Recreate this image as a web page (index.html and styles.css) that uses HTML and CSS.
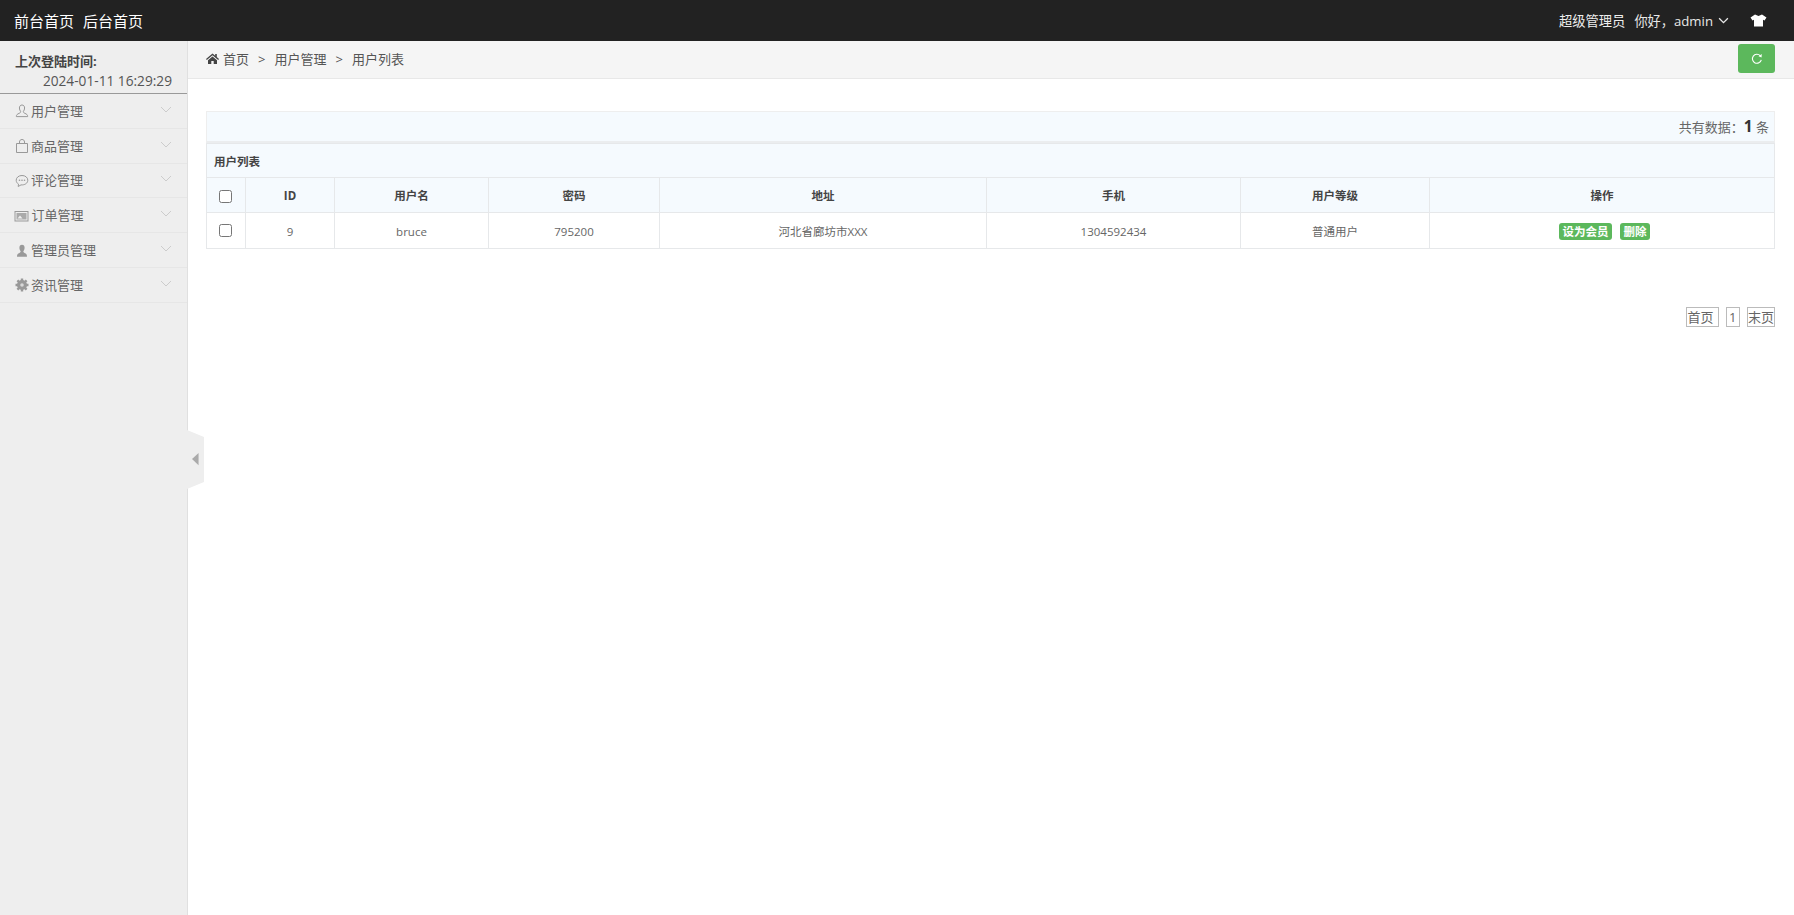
FILE: index.html
```html
<!DOCTYPE html>
<html lang="zh-CN">
<head>
<meta charset="utf-8">
<title>用户列表</title>
<link rel="stylesheet" href="styles.css">
</head>
<body>
<header class="topbar">
  <nav class="topnav"><a>前台首页</a><a>后台首页</a></nav>
  <div class="topuser">
    <span class="role">超级管理员</span>
    <span class="hello">你好，admin</span>
    <svg class="caret" width="11" height="7" viewBox="0 0 12 8"><path d="M1 1.500 6 6.500 11 1.500" fill="none" stroke="#e8e8e8" stroke-width="1.500"/></svg>
    <svg class="shirt" width="17" height="13" viewBox="0 0 17 13"><path d="M5 0.500 8.500 2 12 0.500 16.500 3.500 14.500 6.500 13 5.800V12.500H4V5.800L2.500 6.500 0.500 3.500Z" fill="#fff"/></svg>
  </div>
</header>
<div class="layout">
  <aside class="sidebar">
    <div class="lastlogin">
      <div class="ll-label">上次登陆时间:</div>
      <div class="ll-time">2024-01-11 16:29:29</div>
    </div>
    <ul class="menu">
      <li class="menu-item">
        <svg class="mi" width="14" height="14" viewBox="0 0 14 14"><path d="M7 1C5.300 1 4.400 2.300 4.400 4 4.400 5.600 5 6.600 5.600 7.400 5.800 8.200 5.400 8.800 4 9.400 2.600 10 1.300 10.600 1.300 12.600H12.700C12.700 10.600 11.400 10 10 9.400 8.600 8.800 8.200 8.200 8.400 7.400 9 6.600 9.600 5.600 9.600 4 9.600 2.300 8.700 1 7 1Z" fill="none" stroke="#999" stroke-width="1"/></svg>
        <span class="ml">用户管理</span>
        <svg class="chev" width="12" height="7" viewBox="0 0 12 7"><path d="M1 1 6 6 11 1" fill="none" stroke="#ccc" stroke-width="1"/></svg>
      </li>
      <li class="menu-item">
        <svg class="mi" width="14" height="14" viewBox="0 0 14 14"><path d="M1.500 4.500H12.500V13.500H1.500ZM4.500 4.500V3C4.500 1.400 5.500 .5 7 .5S9.500 1.400 9.500 3V4.500" fill="none" stroke="#999" stroke-width="1"/></svg>
        <span class="ml">商品管理</span>
        <svg class="chev" width="12" height="7" viewBox="0 0 12 7"><path d="M1 1 6 6 11 1" fill="none" stroke="#ccc" stroke-width="1"/></svg>
      </li>
      <li class="menu-item">
        <svg class="mi" width="14" height="14" viewBox="0 0 14 14"><path d="M7 1.500C3.700 1.500 1.200 3.500 1.200 6.200 1.200 8 2.200 9.300 3.500 10.100L3.200 12.500 6 10.900C9.800 11.200 12.800 9.200 12.800 6.200 12.800 3.500 10.300 1.500 7 1.500Z" fill="none" stroke="#999" stroke-width="1"/><circle cx="4.500" cy="6.300" r=".8" fill="#999"/><circle cx="7" cy="6.300" r=".8" fill="#999"/><circle cx="9.500" cy="6.300" r=".8" fill="#999"/></svg>
        <span class="ml">评论管理</span>
        <svg class="chev" width="12" height="7" viewBox="0 0 12 7"><path d="M1 1 6 6 11 1" fill="none" stroke="#ccc" stroke-width="1"/></svg>
      </li>
      <li class="menu-item mi-wide">
        <svg class="mi" width="15" height="12" viewBox="0 0 14 12"><rect x=".5" y="1.500" width="13" height="9.500" fill="none" stroke="#999"/><path d="M2 3H12V9.500H2Z" fill="#aaa"/><path d="M3 8.500 5.500 5.500 8 8.500Z" fill="#eee"/></svg>
        <span class="ml">订单管理</span>
        <svg class="chev" width="12" height="7" viewBox="0 0 12 7"><path d="M1 1 6 6 11 1" fill="none" stroke="#ccc" stroke-width="1"/></svg>
      </li>
      <li class="menu-item">
        <svg class="mi" width="14" height="14" viewBox="0 0 14 14"><path d="M7 .8C5.300 .8 4.400 2.100 4.400 3.800 4.400 5.400 5 6.400 5.600 7.200 5.800 8 5.400 8.600 4 9.200 3 9.600 2 10.100 2 12.800H12C12 10.100 11 9.600 10 9.200 8.600 8.600 8.200 8 8.400 7.200 9 6.400 9.600 5.400 9.600 3.800 9.600 2.100 8.700 .8 7 .8Z" fill="#999"/></svg>
        <span class="ml">管理员管理</span>
        <svg class="chev" width="12" height="7" viewBox="0 0 12 7"><path d="M1 1 6 6 11 1" fill="none" stroke="#ccc" stroke-width="1"/></svg>
      </li>
      <li class="menu-item">
        <svg class="mi" width="14" height="14" viewBox="0 0 14 14"><circle cx="7" cy="7" r="3.600" fill="none" stroke="#999" stroke-width="2.800"/><path d="M7 .5V13.500M.5 7H13.500M2.400 2.400 11.600 11.600M11.600 2.400 2.400 11.600" stroke="#999" stroke-width="2.400"/><circle cx="7" cy="7" r="1.800" fill="#d8d8d8"/></svg>
        <span class="ml">资讯管理</span>
        <svg class="chev" width="12" height="7" viewBox="0 0 12 7"><path d="M1 1 6 6 11 1" fill="none" stroke="#ccc" stroke-width="1"/></svg>
      </li>
    </ul>
    <div class="collapse"><svg width="7" height="14" viewBox="0 0 8 14"><path d="M7.500 0 0 7 7.500 14Z" fill="#aaa"/></svg></div>
  </aside>
  <main class="content">
    <div class="crumbs">
      <svg class="home" width="13" height="11" viewBox="0 0 13 11"><path d="M6.500 .5 0 6 .8 6.900 6.500 2.200 12.200 6.900 13 6 10.800 4.100V1H9.200V2.800ZM2 7.300V11H5.300V8H7.700V11H11V7.300L6.500 3.500Z" fill="#444"/></svg>
      <span>首页</span><span class="sep">&gt;</span><span>用户管理</span><span class="sep">&gt;</span><span>用户列表</span>
      <button class="refresh" type="button" aria-label="刷新"><svg width="12" height="12" viewBox="0 0 12 12"><path d="M10.300 6.900A4.500 4.500 0 1 1 9.200 2.700" fill="none" stroke="#fff" stroke-width="1.100"/><path d="M10.800 1 10.500 4.400 7.500 3.200Z" fill="#fff"/></svg></button>
    </div>
    <div class="panel">
      <div class="totals">共有数据：<strong>1</strong> 条</div>
      <table class="grid">
        <colgroup>
          <col class="c1"><col class="c2"><col class="c3"><col class="c4"><col class="c5"><col class="c6"><col class="c7"><col>
        </colgroup>
        <thead>
          <tr class="title-row"><th colspan="8">用户列表</th></tr>
          <tr class="head-row">
            <th><input type="checkbox"></th><th>ID</th><th>用户名</th><th>密码</th><th>地址</th><th>手机</th><th>用户等级</th><th>操作</th>
          </tr>
        </thead>
        <tbody>
          <tr>
            <td><input type="checkbox"></td><td>9</td><td>bruce</td><td>795200</td><td>河北省廊坊市XXX</td><td>1304592434</td><td>普通用户</td>
            <td class="actions"><a class="tag">设为会员</a><a class="tag">删除</a></td>
          </tr>
        </tbody>
      </table>
      <div class="pager"><a class="first">首页</a><a class="num">1</a><a class="last">末页</a></div>
    </div>
  </main>
</div>
</body>
</html>
```
FILE: styles.css
```css
* { box-sizing: border-box; }
html, body { margin: 0; height: 100%; }
body {
  font-family: "Open Sans", "Noto Sans CJK SC", sans-serif;
  font-size: 12px;
  color: #555;
  background: #fff;
  overflow: hidden;
}
.topbar {
  height: 41px;
  background: #222;
  display: flex;
  align-items: center;
  justify-content: space-between;
  padding: 0 27px 1px 14px;
}
.topnav { display: flex; gap: 9px; color: #fff; font-size: 15px; }
.topuser { display: flex; align-items: center; color: #e8e8e8; font-size: 13.200px; }
.role { color: #eee; font-size: 13.300px; margin-right: 9px; }
.caret { margin-left: 5px; }
.shirt { margin-left: 21px; }
.layout { display: flex; height: 874px; }
.sidebar {
  width: 188px;
  flex: none;
  background: #eee;
  border-right: 1px solid #e0e0e0;
  position: relative;
}
.lastlogin { height: 53px; border-bottom: 1px solid #999; padding: 10px 15px 0; color: #333; }
.ll-label { font-size: 13px; font-weight: 700; line-height: 20px; color: #444; }
.ll-time { font-size: 13.700px; line-height: 20px; text-align: right; color: #555; }
.menu { list-style: none; margin: 0; padding: 0; }
.menu-item {
  height: 34.800px;
  border-bottom: 1px solid #e6e6e6;
  display: flex;
  align-items: center;
  padding: 0 15px 1px 14.500px;
  font-size: 13px;
  color: #666;
  gap: 2.500px;
}
.mi { flex: none; margin-top: 2px; }
.mi-wide { padding-left: 14px; }
.ml { flex: 1; }
.chev { flex: none; margin: -2px 0 0; }
.collapse {
  position: absolute;
  left: 187px;
  top: 389px;
  width: 17px;
  height: 59px;
  background: #eee;
  clip-path: polygon(0 0, 100% 12%, 100% 88%, 0 100%);
  display: flex;
  align-items: center;
  justify-content: center;
  padding: 0 1px 1px 0;
}
.content { flex: 1; min-width: 0; }
.crumbs {
  height: 38px;
  background: #f5f5f5;
  border-bottom: 1px solid #e8e8e8;
  display: flex;
  align-items: center;
  padding: 0 19px 2px 18px;
  font-size: 13px;
  color: #555;
}
.home { margin-right: 4px; }
.sep { margin: 0 9px; }
.refresh {
  margin-left: auto;
  width: 37px;
  height: 29px;
  border: 0;
  border-radius: 3px;
  background: #5cb85c;
  display: flex;
  align-items: center;
  justify-content: center;
  padding: 0;
}
.panel { padding: 32px 19px 0 18px; }
.totals {
  height: 32px;
  background: #f5fafe;
  border: 1px solid #eee;
  border-bottom: 2px solid #ebedef;
  text-align: right;
  line-height: 29px;
  padding-right: 5px;
  font-size: 13px;
  color: #666;
}
.totals strong { color: #333; font-size: 15.500px; }
.grid {
  width: 100%;
  border-collapse: collapse;
  table-layout: fixed;
  font-size: 12px;
}
.c1 { width: 39px; }
.c2 { width: 89px; }
.c3 { width: 154px; }
.c4 { width: 171px; }
.c5 { width: 327px; }
.c6 { width: 254px; }
.c7 { width: 189px; }
.grid th, .grid td {
  border: 1px solid #e6e8ea;
  text-align: center;
  padding: 0;
  height: 35px;
}
.grid th { background: #f5fafe; color: #444; font-weight: 700; font-size: 11.500px; }
.grid td { height: 36px; color: #666; font-size: 11.500px; padding-top: 1px; }
.title-row th { text-align: left; padding-left: 7px; height: 34px; }
.grid input { width: 13px; height: 13px; margin: 0 0 0 -2px; vertical-align: middle; }
.grid td input { margin-top: -3px; }
.grid td.actions { padding-left: 5px; }
.tag {
  display: inline-block;
  background: #5cb85c;
  color: #fff;
  font-weight: 700;
  font-size: 11.500px;
  line-height: 17px;
  padding: 0 3.500px;
  border-radius: 3px;
  margin-right: 8px;
}
.tag:last-child { margin-right: 0; }
.pager { display: flex; justify-content: flex-end; gap: 7px; margin-top: 58px; font-size: 13px; }
.pager a { border: 1px solid #bbb; line-height: 18px; color: #666; }
.pager .first { padding: 0 4px 0 1px; }
.pager .num { padding: 0 2.500px; }
```
